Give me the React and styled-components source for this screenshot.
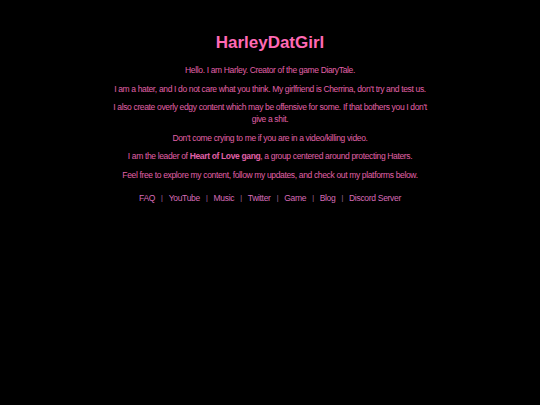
import React from "react";
import styled, { createGlobalStyle } from "styled-components";

const GlobalStyle = createGlobalStyle`
  html, body {
    margin: 0;
    padding: 0;
    background: #000;
  }
  body {
    font-family: "Liberation Sans", Arial, sans-serif;
    color: #ff69b4;
  }
`;

let Page = styled.div`
  min-height: 405px;
  background: #000;
  display: flex;
  flex-direction: column;
  align-items: center;
  padding-top: 33px;
  box-sizing: border-box;
`;

let Title = styled.h1`
  margin: 0 0 11px;
  font-size: 17px;
  font-weight: bold;
  color: #ff69b4;
  line-height: 20px;
`;

let Bio = styled.div`
  width: 318px;
  text-align: center;
  display: flex;
  flex-direction: column;
  gap: 6.5px;
`;

let Line = styled.p`
  margin: 0;
  font-size: 8.5px;
  letter-spacing: -0.35px;
  line-height: 12px;
  color: #e060a8;
`;

let Nav = styled.nav`
  margin-top: 11px;
  display: flex;
  align-items: center;
  font-size: 8.5px;
  letter-spacing: -0.3px;
  line-height: 12px;
`;

let NavLink = styled.a`
  color: #d86cb8;
  text-decoration: none;
`;

let Sep = styled.span`
  color: #b070a0;
  margin: 0 6px;
  font-size: 7px;
`;

const links = ["FAQ", "YouTube", "Music", "Twitter", "Game", "Blog", "Discord Server"];

export default function App() {
  return (
    <>
      <GlobalStyle />
      <Page>
        <Title>HarleyDatGirl</Title>
        <Bio>
          <Line>Hello. I am Harley. Creator of the game DiaryTale.</Line>
          <Line>
            I am a hater, and I do not care what you think. My girlfriend is Cherrina, don't try and test us.
          </Line>
          <Line>
            I also create overly edgy content which may be offensive for some. If that bothers you I don't give a shit.
          </Line>
          <Line>Don't come crying to me if you are in a video/killing video.</Line>
          <Line>
            I am the leader of <b>Heart of Love gang</b>, a group centered around protecting Haters.
          </Line>
          <Line>Feel free to explore my content, follow my updates, and check out my platforms below.</Line>
        </Bio>
        <Nav>
          {links.map((l, i) => (
            <React.Fragment key={l}>
              {i > 0 && <Sep>|</Sep>}
              <NavLink href="#">{l}</NavLink>
            </React.Fragment>
          ))}
        </Nav>
      </Page>
    </>
  );
}
